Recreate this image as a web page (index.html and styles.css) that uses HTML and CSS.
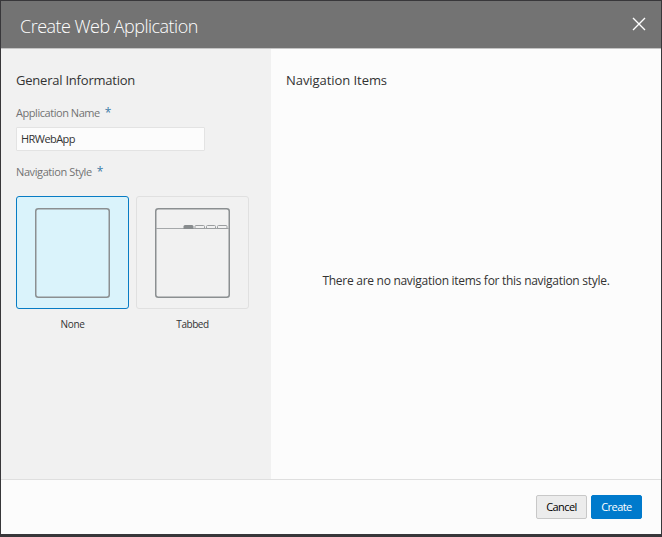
FILE: index.html
```html
<!DOCTYPE html>
<html lang="en">
<head>
<meta charset="utf-8">
<title>Create Web Application</title>
<link rel="stylesheet" href="styles.css">
</head>
<body>
<div class="dialog" role="dialog">
  <header class="header">
    <h1 class="title"><span>Create Web Application</span></h1>
    <button class="close" aria-label="Close"><svg width="14" height="14" viewBox="0 0 14 14"><path d="M1 1L13 13M13 1L1 13"/></svg></button>
  </header>
  <main class="body">
    <section class="general">
      <h2 class="heading"><span class="heading-general">General Information</span></h2>
      <label class="label label-name" for="name"><span class="label-app">Application Name</span><b class="required">*</b></label>
      <div class="field"><span id="name">HRWebApp</span></div>
      <div class="label label-style"><span class="label-nav">Navigation Style</span><b class="required">*</b></div>
      <div class="options">
        <div class="option">
          <div class="tile selected"><svg width="75" height="90" viewBox="0 0 75 90"><rect class="frame" x=".75" y=".75" width="73.5" height="88.5" rx="2.5"/></svg></div>
          <span class="caption none">None</span>
        </div>
        <div class="option">
          <div class="tile"><svg width="75" height="90" viewBox="0 0 75 90"><rect class="frame" x=".75" y=".75" width="73.5" height="88.5" rx="2.5"/><path class="rule" d="M1 20.5H74"/><path class="active" d="M28.500 21V18.500Q28.500 17 30 17H37Q38.500 17 38.500 18.500V21Z"/><path class="tab" d="M40 20.500V18.500Q40 17.500 41 17.500H48.500Q49.500 17.500 49.500 18.500V20.500ZM51.500 20.500V18.500Q51.500 17.500 52.500 17.500H59.500Q60.500 17.500 60.500 18.500V20.500ZM62.500 20.500V18.500Q62.500 17.500 63.500 17.500H71Q72 17.500 72 18.500V20.500Z"/></svg></div>
          <span class="caption tabbed">Tabbed</span>
        </div>
      </div>
    </section>
    <section class="items">
      <h2 class="heading"><span class="heading-items">Navigation Items</span></h2>
      <p class="empty"><span>There are no navigation items for this navigation style.</span></p>
    </section>
  </main>
  <footer class="footer">
    <button class="button cancel"><span>Cancel</span></button>
    <button class="button create"><span>Create</span></button>
  </footer>
</div>
</body>
</html>
```
FILE: styles.css
```css
* { box-sizing: border-box; }
body {
  margin: 0;
  height: 537px;
  padding: 1px 1px 3px;
  overflow: hidden;
  background: #38373a;
  font-family: "Open Sans", "Noto Sans", sans-serif;
  color: #333;
}
h1, h2, p { margin: 0; font-weight: 400; }
span { white-space: nowrap; }
.dialog { height: 533px; display: flex; flex-direction: column; background: #fcfcfc; }
.header {
  height: 48px;
  display: flex;
  align-items: center;
  justify-content: space-between;
  padding: 0 15px 0 19px;
  background: #737373;
  border-bottom: 1px solid #c4c4c4;
}
.title { font-size: 18px; font-weight: 300; line-height: 24px; letter-spacing: -.52px; color: #fff; padding-top: 3px; }
.close { display: flex; margin-top: -2px; padding: 0; border: 0; background: none; }
.close svg { fill: none; stroke: #fff; stroke-width: 1.4; }
.body { height: 430px; display: flex; }
.general { width: 270px; padding: 21px 15px 0; background: #f1f1f1; }
.items { flex: 1; padding: 21px 15px 0; }
.heading { font-size: 13px; line-height: 20px; }
.heading-general { letter-spacing: -.22px; }
.heading-items { letter-spacing: -.06px; }
.label { display: flex; gap: 5px; font-size: 11px; line-height: 16px; color: #737373; }
.label-app { letter-spacing: -.45px; }
.label-nav { letter-spacing: -.4px; }
.label-name { margin-top: 15px; }
.label-style { margin-top: 13px; }
.required { color: #3d7ba8; font-size: 12px; font-weight: 400; }
.field {
  width: 189px;
  height: 24px;
  margin-top: 6px;
  padding: 0 4px;
  border: 1px solid #e3e3e3;
  border-radius: 1px;
  background: #fcfcfc;
  font-size: 11px;
  line-height: 22px;
  letter-spacing: -.55px;
}
.options { display: flex; gap: 7px; margin-top: 16px; }
.option { display: flex; flex-direction: column; align-items: center; }
.tile {
  width: 113px;
  height: 113px;
  display: flex;
  align-items: center;
  justify-content: center;
  border: 1px solid #e0e0e0;
  border-radius: 3px;
}
.tile svg { fill: none; }
.selected { background: #daf3fb; border-color: #087cc4; }
.frame { stroke: #8b8f91; stroke-width: 1.5; }
.rule { stroke: #a5a8aa; }
.active { fill: #888c8e; }
.tab { stroke: #9b9ea0; }
.caption { margin-top: 7px; font-size: 10px; line-height: 16px; }
.none { letter-spacing: -.3px; }
.tabbed { letter-spacing: -.45px; }
.empty { margin-top: 181px; text-align: center; font-size: 12px; line-height: 20px; letter-spacing: -.28px; }
.footer {
  height: 55px;
  display: flex;
  justify-content: flex-end;
  gap: 4px;
  padding: 15px 19px 0 0;
  border-top: 1px solid #dfdfdf;
}
.button {
  width: 51px;
  height: 24px;
  padding: 0;
  border: 1px solid #c8c8c8;
  border-radius: 2px;
  background: #ececec;
  font: 11px/22px "Open Sans", "Noto Sans", sans-serif;
  letter-spacing: -.55px;
  color: #000;
}
.create { background: #007acc; border-color: #007acc; color: #fff; }
```
